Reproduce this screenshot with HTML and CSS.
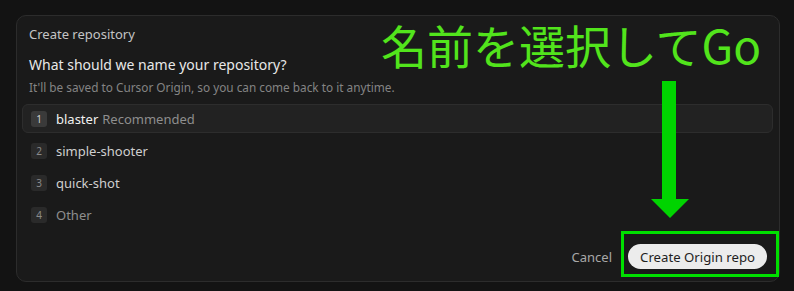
FILE: index.html
```html
<!DOCTYPE html>
<html lang="en">
<head>
    <meta charset="UTF-8">
    <meta name="viewport" content="width=device-width, initial-scale=1.0">
    <title>Create repository</title>
    <link rel="stylesheet" href="styles.css">
</head>
<body>
    <div class="dialog">
        <div class="dialog-head">
            <p class="dialog-title">Create repository</p>
            <h2 class="question">What should we name your repository?</h2>
            <p class="hint">It'll be saved to Cursor Origin, so you can come back to it anytime.</p>
        </div>
        <div class="options">
            <div class="option selected">
                <span class="num">1</span>
                <span class="name">blaster</span>
                <span class="tag">Recommended</span>
            </div>
            <div class="option">
                <span class="num">2</span>
                <span class="name">simple-shooter</span>
            </div>
            <div class="option">
                <span class="num">3</span>
                <span class="name">quick-shot</span>
            </div>
            <div class="option">
                <span class="num">4</span>
                <span class="name other">Other</span>
            </div>
        </div>
        <div class="actions">
            <button class="cancel">Cancel</button>
            <button class="create">Create Origin repo</button>
        </div>
    </div>

    <!-- annotation drawn over the screenshot -->
    <div class="note">名前を選択してGo</div>
    <svg class="arrow" width="40" height="140" viewBox="0 0 40 140">
        <rect x="12" y="1" width="14" height="120" fill="#00d400"/>
        <polygon points="1,119 39,119 20,138" fill="#00d400"/>
    </svg>
    <div class="highlight"></div>
</body>
</html>
```

FILE: styles.css
```css
body {
    margin: 0;
    background: #131313;
    font-family: "Noto Sans", Arial, sans-serif;
    color: #e4e4e4;
    padding: 15px 14px 10px 16px;
}
.dialog {
    position: relative;
    height: 267px;
    box-sizing: border-box;
    background: #1a1a1a;
    border: 1px solid #2c2c2c;
    border-radius: 10px;
    padding: 8px 6px 12px 5px;
    display: flex;
    flex-direction: column;
}
.dialog-head {
    padding: 0 7px;
}
.dialog-title {
    margin: 0;
    font-size: 13px;
    line-height: 20px;
    color: #c4c4c4;
}
.question {
    margin: 11px 0 0;
    font-size: 14px;
    font-weight: 400;
    line-height: 20px;
    color: #e8e8e8;
}
.hint {
    margin: 3px 0 0;
    font-size: 11.8px;
    line-height: 18px;
    color: #848484;
}
.options {
    margin-top: 8px;
    display: flex;
    flex-direction: column;
    gap: 3px;
}
.option {
    height: 29px;
    box-sizing: border-box;
    display: flex;
    align-items: center;
    padding: 0 8px;
    border: 1px solid transparent;
    border-radius: 6px;
    font-size: 13px;
}
.option.selected {
    background: #222222;
    border-color: #2d2d2d;
}
.num {
    width: 16px;
    height: 16px;
    border-radius: 3px;
    background: #2a2a2a;
    color: #8a8a8a;
    font-size: 10px;
    display: flex;
    align-items: center;
    justify-content: center;
    margin-right: 9px;
}
.selected .num {
    background: #3a3a3a;
    color: #d0d0d0;
}
.name {
    color: #cfcfcf;
}
.selected .name {
    color: #f0f0f0;
}
.name.other {
    color: #8e8e8e;
}
.tag {
    margin-left: 4px;
    color: #8e8e8e;
}
.actions {
    margin-top: auto;
    display: flex;
    justify-content: flex-end;
    align-items: center;
    gap: 16px;
    padding-right: 6px;
}
.cancel {
    background: none;
    border: none;
    color: #a8a8a8;
    font-family: inherit;
    font-size: 13px;
    padding: 0;
}
.create {
    height: 25px;
    padding: 0 12px;
    border: none;
    border-radius: 13px;
    background: #ececec;
    color: #1e1e1e;
    font-family: inherit;
    font-size: 13.2px;
}
.note {
    position: absolute;
    left: 381px;
    top: 15px;
    font-family: "Noto Sans CJK JP", "Noto Sans", sans-serif;
    font-size: 46px;
    line-height: 58px;
    color: #52e41c;
    white-space: nowrap;
}
.arrow {
    position: absolute;
    left: 650px;
    top: 80px;
}
.highlight {
    position: absolute;
    left: 621px;
    top: 231px;
    width: 152px;
    height: 40px;
    border: 3px solid #00e000;
}
```
